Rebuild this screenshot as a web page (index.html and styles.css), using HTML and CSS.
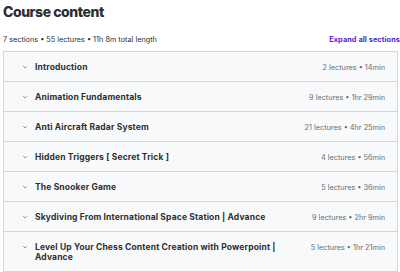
FILE: index.html
```html
<!DOCTYPE html>
<html lang="en">
<head>
  <meta charset="UTF-8" />
  <title>Course content</title>
  <link rel="stylesheet" href="styles.css">
</head>
<body>
  <div class="curriculum">
    <h2>Course content</h2>
    <div class="summary">
      <span>7 sections • 55 lectures • 11h 8m total length</span>
      <button class="expand">Expand all sections</button>
    </div>
    <div class="sections">
      <div class="section">
        <span class="chev"><svg viewBox="0 0 10 10" width="6" height="6"><path d="M2 3.5 5 6.5 8 3.5" /></svg></span>
        <span class="title">Introduction</span>
        <span class="meta">2 lectures • 14min</span>
      </div>
      <div class="section">
        <span class="chev"><svg viewBox="0 0 10 10" width="6" height="6"><path d="M2 3.5 5 6.5 8 3.5" /></svg></span>
        <span class="title">Animation Fundamentals</span>
        <span class="meta">9 lectures • 1hr 29min</span>
      </div>
      <div class="section">
        <span class="chev"><svg viewBox="0 0 10 10" width="6" height="6"><path d="M2 3.5 5 6.5 8 3.5" /></svg></span>
        <span class="title">Anti Aircraft Radar System</span>
        <span class="meta">21 lectures • 4hr 25min</span>
      </div>
      <div class="section">
        <span class="chev"><svg viewBox="0 0 10 10" width="6" height="6"><path d="M2 3.5 5 6.5 8 3.5" /></svg></span>
        <span class="title">Hidden Triggers [ Secret Trick ]</span>
        <span class="meta">4 lectures • 56min</span>
      </div>
      <div class="section">
        <span class="chev"><svg viewBox="0 0 10 10" width="6" height="6"><path d="M2 3.5 5 6.5 8 3.5" /></svg></span>
        <span class="title">The Snooker Game</span>
        <span class="meta">5 lectures • 36min</span>
      </div>
      <div class="section">
        <span class="chev"><svg viewBox="0 0 10 10" width="6" height="6"><path d="M2 3.5 5 6.5 8 3.5" /></svg></span>
        <span class="title">Skydiving From International Space Station | Advance</span>
        <span class="meta">9 lectures • 2hr 9min</span>
      </div>
      <div class="section">
        <span class="chev"><svg viewBox="0 0 10 10" width="6" height="6"><path d="M2 3.5 5 6.5 8 3.5" /></svg></span>
        <span class="title">Level Up Your Chess Content Creation with Powerpoint | Advance</span>
        <span class="meta">5 lectures • 1hr 21min</span>
      </div>
    </div>
  </div>
</body>
</html>
```

FILE: styles.css
```css
body {
  margin: 0;
  background: #fff;
  color: #2d2f31;
  font-family: Inter, "Liberation Sans", sans-serif;
  overflow: hidden;
}
.curriculum {
  padding: 2px 2px 0 3px;
}
h2 {
  margin: 0;
  font-size: 14px;
  font-weight: 800;
  line-height: 20px;
  letter-spacing: -0.45px;
}
.summary {
  display: flex;
  justify-content: space-between;
  align-items: center;
  margin: 12px -2px 0 0;
  font-size: 7.3px;
  height: 10px;
}
.expand {
  background: none;
  border: none;
  padding: 0;
  font: inherit;
  font-weight: 700;
  letter-spacing: 0.1px;
  color: #5624d0;
  white-space: nowrap;
}
.sections {
  margin-top: 7px;
  border: 1px solid #d1d7dc;
  border-bottom: 0;
}
.section {
  display: flex;
  align-items: baseline;
  padding: 9.5px 12px 9.5px 18px;
  background: #f7f9fa;
  border-bottom: 1px solid #d1d7dc;
}
.chev {
  width: 13px;
  flex: none;
  align-self: center;
  display: flex;
}
.section:last-child .chev {
  align-self: flex-start;
  padding-top: 2px;
}
.chev svg {
  fill: none;
  stroke: #6a6f73;
  stroke-width: 1.3;
}
.title {
  flex: 1;
  font-size: 8.5px;
  font-weight: 700;
  letter-spacing: 0.15px;
  line-height: 10px;
  padding-right: 26px;
}
.meta {
  font-size: 7.3px;
  color: #6a6f73;
  white-space: nowrap;
}
```
